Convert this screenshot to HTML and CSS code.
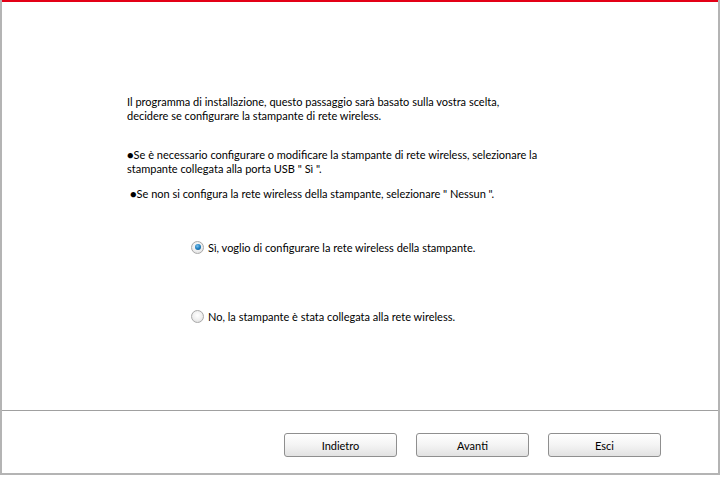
FILE: index.html
```html
<!DOCTYPE html>
<html lang="it">
<head>
<meta charset="utf-8">
<title>Installazione</title>
<link rel="stylesheet" href="styles.css">
</head>
<body>
<div class="window">
  <div class="topbar"></div>
  <div class="main">
    <p class="intro">Il programma di installazione, questo passaggio sarà basato sulla vostra scelta,<br>decidere se configurare la stampante di rete wireless.</p>
    <p class="note">●Se è necessario configurare o modificare la stampante di rete wireless, selezionare la<br>stampante collegata alla porta USB " Sì ".</p>
    <p class="note note-indent">●Se non si configura la rete wireless della stampante, selezionare " Nessun ".</p>
    <div class="options">
      <label class="option"><span class="radio checked"></span><span>Sì, voglio di configurare la rete wireless della stampante.</span></label>
      <label class="option"><span class="radio"></span><span>No, la stampante è stata collegata alla rete wireless.</span></label>
    </div>
  </div>
  <div class="footer">
    <button class="btn">Indietro</button>
    <button class="btn">Avanti</button>
    <button class="btn">Esci</button>
  </div>
</div>
</body>
</html>
```
FILE: styles.css
```css
html, body {
  margin: 0;
  padding: 0;
  background: #ffffff;
}
body {
  font-family: "Lato", "Liberation Sans", Arial, sans-serif;
  font-size: 11px;
  color: #000;
}
.window {
  width: 716px;
  height: 473px;
  border-left: 2px solid #b4b4b4;
  border-right: 2px solid #b4b4b4;
  border-bottom: 2px solid #b4b4b4;
  display: flex;
  flex-direction: column;
  background: #fff;
}
.topbar {
  height: 2px;
  background: #e30016;
}
.main {
  flex: 1;
  padding: 93px 0 0 125px;
}
p {
  margin: 0;
  line-height: 14px;
}
.intro {
  margin-bottom: 25px;
}
.note {
  margin-bottom: 11px;
}
.note-indent {
  padding-left: 3px;
}
.options {
  display: flex;
  flex-direction: column;
  gap: 55px;
  margin-top: 39px;
  padding-left: 64px;
}
.option {
  display: flex;
  align-items: center;
  gap: 4px;
  height: 14px;
}
.radio {
  width: 11px;
  height: 11px;
  border-radius: 50%;
  border: 1px solid #a9a9a9;
  background: radial-gradient(circle at 50% 40%, #ffffff 0%, #f0f0f0 50%, #d8d8d8 100%);
  box-sizing: content-box;
  position: relative;
}
.radio.checked::after {
  content: "";
  position: absolute;
  left: 2.5px;
  top: 2.5px;
  width: 6px;
  height: 6px;
  border-radius: 50%;
  background: radial-gradient(circle at 40% 35%, #7cc0ec 0%, #1e7fc0 50%, #0c4d80 100%);
}
.footer {
  box-sizing: border-box;
  height: 63px;
  flex: none;
  border-top: 1px solid #a0a0a0;
  display: flex;
  justify-content: flex-end;
  align-items: flex-start;
  gap: 19px;
  padding: 22px 57px 0 0;
}
.btn {
  width: 113px;
  height: 24px;
  border: 1px solid #8f8f8f;
  border-radius: 3px;
  background: linear-gradient(#ffffff 0%, #f4f4f4 50%, #e2e2e2 100%);
  font-family: inherit;
  font-size: 11px;
  color: #000;
  padding: 0;
}
```
